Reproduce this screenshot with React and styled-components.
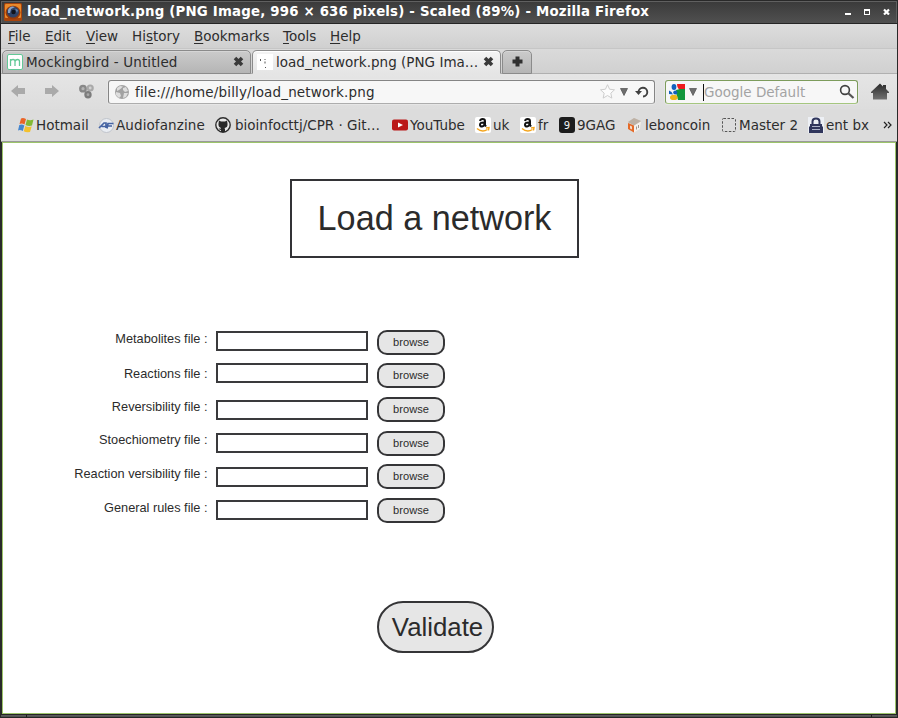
import React from 'react';
import styled, { createGlobalStyle, css } from 'styled-components';

const GlobalStyle = createGlobalStyle`
  html, body, #root { margin: 0; padding: 0; height: 100%; }
  body { overflow: hidden; background: #2b2b2b; }
  * { box-sizing: border-box; }
  svg { display: block; flex: none; }
`;

const Window = styled.div`
  width: 898px;
  height: 718px;
  display: flex;
  flex-direction: column;
  background: #292929;
  font-family: 'DejaVu Sans', sans-serif;
  font-size: 13.5px;
  color: #2d2d2d;
  white-space: nowrap;
`;

const TitleBar = styled.header`
  height: 24px;
  flex: none;
  display: flex;
  align-items: center;
  padding: 0 7px 1px 3px;
  border: 1px solid #292929;
  border-bottom-color: #252525;
  box-shadow: inset 0 1px #606060, inset 1px 0 #606060, inset -1px 0 #606060;
  background: linear-gradient(#3a3a3a, #505050);
  color: #fff;
`;

const Title = styled.h1`
  margin: 0 auto 0 5px;
  font-size: 13.33px;
  font-weight: bold;
  letter-spacing: 0.19px;
`;

const WindowButtons = styled.div`
  display: flex;
  gap: 12px;
`;

const Chrome = styled.div`
  flex: none;
  height: 118px;
  margin: 0 1px;
  display: flex;
  flex-direction: column;
  background: #dcdcdc;
  border-bottom: 1px solid #9a9a9a;
`;

const MenuBar = styled.nav`
  height: 25px;
  flex: none;
  display: flex;
  align-items: center;
  padding: 0 0 1px 7px;
  background: linear-gradient(#dddddd, #d0d0d0);
  border-bottom: 1px solid #c6c6c6;
`;

const MenuItem = styled.div`
  width: ${(p) => p.$width}px;
  u { text-underline-offset: 2px; text-decoration-thickness: 1px; text-decoration-skip-ink: none; }
`;

const TabStrip = styled.div`
  height: 25px;
  flex: none;
  display: flex;
  align-items: flex-end;
  gap: 1px;
  padding-left: 1px;
  background: linear-gradient(#dadada, #d0d0d0);
  box-shadow: inset 0 -1px #b0b0b0;
`;

const Tab = styled.div`
  width: ${(p) => p.$width}px;
  height: 24px;
  display: flex;
  align-items: center;
  padding: 0 6px 1px 4px;
  border: 1px solid #8b8b8b;
  border-radius: 5px 5px 0 0;
  background: linear-gradient(#cbcbcb, #b5b5b5);
  box-shadow: inset 0 1px #d6d6d6;
  ${(p) => p.$active && css`
    background: linear-gradient(#f4f4f4, #e5e5e5);
    border-bottom-color: #e5e5e5;
    box-shadow: inset 0 1px #fff;
  `}
  ${(p) => p.$center && css`justify-content: center; padding: 0 0 1px;`}
`;

const TabLabel = styled.span`
  margin: 0 auto 0 3px;
  letter-spacing: ${(p) => p.$spacing || 0}px;
`;

const NavBar = styled.div`
  height: 35px;
  flex: none;
  display: flex;
  align-items: center;
  padding: 0 8px 0 10px;
  background: linear-gradient(#e5e5e5, #dddddd);
`;

const NavButtons = styled.div`
  width: 97px;
  display: flex;
  gap: 19px;
`;

const Field = styled.div`
  width: ${(p) => p.$width}px;
  height: 24px;
  display: flex;
  align-items: center;
  padding: 0 ${(p) => (p.$search ? 2 : 5)}px 0 ${(p) => (p.$search ? 3 : 5)}px;
  border: 1px solid ${(p) => (p.$search ? '#7d9c5c' : '#858585')};
  border-bottom-color: ${(p) => (p.$search ? '#a5c67f' : '#adadad')};
  border-radius: 3px;
  background: #f7f7f7;
  box-shadow: 0 0 0 1px rgba(235, 235, 235, 0.6);
  margin-right: ${(p) => (p.$search ? 13 : 10)}px;
`;

const Address = styled.span`
  margin: 0 auto 0 5px;
  letter-spacing: 0.15px;
`;

const FieldIcons = styled.div`
  display: flex;
  align-items: center;
  gap: ${(p) => p.$gap}px;
`;

const ReloadButton = styled.div`
  padding-left: 3px;
`;

const Placeholder = styled.span`
  margin: 1px auto 0 6px;
  height: 17px;
  line-height: 17px;
  border-left: 1px solid #111;
  color: #a3a3a3;
`;

const Bookmarks = styled.div`
  flex: 1;
  display: flex;
  align-items: center;
  padding: 0 0 0 17px;
`;

const Bookmark = styled.div`
  width: ${(p) => p.$width}px;
  flex: none;
  display: flex;
  align-items: center;
  gap: 2px;
  letter-spacing: ${(p) => p.$spacing || 0}px;
`;

const BookmarkName = styled.span`
  padding-left: ${(p) => (p.$wide ? 2 : 0)}px;
`;

const Page = styled.main`
  height: 572px;
  flex: none;
  margin: 0 2px;
  border: 1px solid #9cc46a;
  background: #fff;
  display: flex;
  flex-direction: column;
  font-family: 'Liberation Sans', Arial, sans-serif;
  color: #2b2b2b;
`;

const Heading = styled.h2`
  width: 289px;
  height: 79px;
  margin: 36px 0 0 287px;
  border: 2px solid #333336;
  font-size: 34.2px;
  font-weight: normal;
  line-height: 75px;
  text-align: center;
`;

const Form = styled.form`
  margin: 72px 0 0 59px;
  display: flex;
  flex-direction: column;
`;

const Row = styled.div`
  height: ${(p) => p.$height}px;
  display: grid;
  grid-template-columns: 145px 152px 68px;
  column-gap: 9px;
  align-items: start;
`;

const FileLabel = styled.label`
  margin: ${(p) => p.$top}px -0.5px 0 0;
  line-height: 16px;
  font-size: 12.75px;
  text-align: right;
`;

const FileInput = styled.input`
  width: 152px;
  height: 20px;
  margin: ${(p) => p.$top}px 0 0;
  padding: 0 4px;
  border: 2px solid #3a3a3c;
  border-radius: 0;
  background: #fff;
  outline: none;
`;

const Button = styled.button`
  width: ${(p) => (p.$large ? 117 : 68)}px;
  height: ${(p) => (p.$large ? 52 : 25)}px;
  margin: ${(p) => (p.$large ? '78px 0 0 315px' : '0')};
  padding: ${(p) => (p.$large ? '0 0 0 4px' : '0 0 1px')};
  border: 2px solid #353537;
  border-radius: ${(p) => (p.$large ? 26 : 10)}px;
  background: #e6e6e6;
  font: ${(p) => (p.$large ? 25.8 : 11.1)}px 'Liberation Sans', Arial, sans-serif;
  color: #2b2b2b;
`;

const WindowFoot = styled.footer`
  height: 4px;
  flex: none;
  margin: 0 1px;
  display: grid;
  grid-template-columns: 25px 1fr 25px;
  column-gap: 1px;
  border-top: 1px solid #252525;
  border-bottom: 1px solid #252525;
  background: #1c1c1c;
`;

const Grip = styled.div`
  background: linear-gradient(#606060, #4c4c4c);
`;

const FirefoxIcon = () => (
  <svg width="18" height="18" viewBox="0 0 18 18">
    <rect width="18" height="18" rx="1.5" fill="#a8440c" />
    <rect x="1" y="1" width="16" height="14" rx="1" fill="#e98a2c" />
    <ellipse cx="9" cy="9.5" rx="7.5" ry="6.8" fill="#9a3b08" />
    <ellipse cx="9" cy="9" rx="6" ry="5.5" fill="#2f4266" />
    <path d="M4 7Q6 2 11 4L7 6 6 10 4 10Z" fill="#8aa3c4" />
    <circle cx="9.5" cy="9" r="2.2" fill="#11131b" />
    <path d="M11 5.500l3 1.500-1 3z" fill="#6683ac" />
  </svg>
);
const MinimizeIcon = () => (
  <svg width="7" height="7"><path d="M0 5h6v2H0z" fill="#fff" /></svg>
);
const MaximizeIcon = () => (
  <svg width="7" height="7"><path d="M0 1h6v6H0zM1 3v3h4V3z" fill="#fff" fillRule="evenodd" /></svg>
);
const CloseIcon = () => (
  <svg width="7" height="7"><path d="M1 1.500l5 5M6 1.500l-5 5" stroke="#fff" strokeWidth="2.200" /></svg>
);
const MockingbirdIcon = () => (
  <svg width="16" height="16" fill="none" stroke="#63c997">
    <rect x=".5" y=".5" width="15" height="15" rx="1.500" fill="#fff" />
    <path d="M3.500 12V5M3.500 7Q4 5.500 6 5.500 8 5.500 8 7.500V12M8 7.500Q8.500 5.500 10.500 5.500 12.500 5.500 12.500 7.500V12" strokeWidth="1.300" />
  </svg>
);
const PageIcon = () => (
  <svg width="16" height="16">
    <rect width="16" height="16" fill="#fff" />
    <path d="M3 5h1v2H3zM7.500 5h1v1h-1zM7.500 7.500h1v2h-1zM8 13h1v1H8z" fill="#555" />
  </svg>
);
const TabCloseIcon = () => (
  <svg width="11" height="11">
    <path d="M2 2l7 7M9 2l-7 7" stroke="#3a3a3a" strokeWidth="3.600" />
  </svg>
);
const PlusIcon = () => (
  <svg width="11" height="11"><path d="M3.500.5h4v3h3v4h-3v3h-4v-3h-3v-4h3z" fill="#303030" /></svg>
);
const ArrowIcon = ({ d }) => (
  <svg width="15" height="15"><path transform="translate(0 1)" d={d} fill="#aaaaaa" /></svg>
);
const CirclesIcon = () => (
  <svg width="15" height="15">
    <circle cx="4" cy="4.700" r="3.900" fill="#888" />
    <circle cx="11.200" cy="4" r="3.600" fill="#a9a9a9" />
    <circle cx="9" cy="10.700" r="3.700" fill="#7c7c7c" />
    <circle cx="4" cy="4.700" r="1.600" fill="#b4b4b4" />
    <circle cx="11.200" cy="4" r="1.400" fill="#d2d2d2" />
    <circle cx="9" cy="10.700" r="1.400" fill="#a8a8a8" />
  </svg>
);
const GlobeIcon = () => (
  <svg width="16" height="16">
    <circle cx="8" cy="8" r="7" fill="#a2a2a2" />
    <path d="M3 4l3-2 3 .5-2 2L5 6 3 7zM9 4l3-1 2 4-3 1-2-2zM2 8l4 1 1 3-2 2-3-3zM10 9l4 0-2 4-3 1z" fill="#dedede" />
  </svg>
);
const StarIcon = () => (
  <svg width="17" height="17" viewBox="0 0 18 17">
    <path d="M9 1.300l2.200 4.800 5.200.6-3.900 3.600 1.100 5.200L9 12.800l-4.600 2.700 1.100-5.200L1.600 6.700l5.200-.6z" fill="#fcfcfc" stroke="#cacaca" />
  </svg>
);
const DropIcon = () => (
  <svg width="8" height="8"><path d="M.5.5h7L4 7.500z" fill="#6d6d6d" stroke="#505050" strokeWidth=".7" /></svg>
);
const ReloadIcon = () => (
  <svg width="14" height="13" fill="none">
    <path d="M3.500 7.200A4.400 4.400 0 1 1 8 11.500" stroke="#404040" strokeWidth="1.900" />
    <path d="M0 6h7L3.500 10z" fill="#404040" />
  </svg>
);
const GoogleIcon = () => (
  <svg width="16" height="16">
    <rect width="16" height="16" fill="#f4f6fa" />
    <path d="M8 0h8v6H11Q8 4 8 0z" fill="#ee1c1c" />
    <path d="M11 5h5v11H9Q7 10 7 6z" fill="#12963c" />
    <path d="M0 6.500q3 1 4 4L0 10z" fill="#1261bd" />
    <ellipse cx="5" cy="3" rx="2.400" ry="3" fill="#1261bd" />
    <circle cx="6.300" cy="8.500" r="2.100" fill="#1261bd" />
    <ellipse cx="4.800" cy="13.400" rx="3.800" ry="2.600" fill="#efb51a" />
  </svg>
);
const SearchIcon = () => (
  <svg width="16" height="16" fill="none">
    <circle cx="6" cy="6" r="4.400" stroke="#404040" strokeWidth="1.600" />
    <path d="M9 9l5.500 5" stroke="#555" strokeWidth="2.300" />
  </svg>
);
const HomeIcon = () => (
  <svg width="18" height="17">
    <defs><linearGradient id="roof" x2="0" y2="1"><stop stopColor="#292929" /><stop offset="1" stopColor="#727272" /></linearGradient></defs>
    <path d="M9 .5l3 3V2h3v4l3 3v1h-2v6.500H2V10H0V9z" fill="url(#roof)" />
  </svg>
);
const WindowsIcon = () => (
  <svg width="16" height="16">
    <path d="M3 1.500Q5 .5 8 2L6.500 7.500Q4 6 1.500 7z" fill="#ea6427" />
    <path d="M9 2.500Q12 4 15.500 2.500L14 8.500Q11 9.500 7.500 8z" fill="#83b935" />
    <path d="M1.300 8Q4 7 6.300 8.500L4.800 14Q2 12.500 0 13.500z" fill="#4586cf" />
    <path d="M7.300 9Q10 10.500 13.700 9.500L12 15Q8 15.500 5.800 14.300z" fill="#f3c12e" />
  </svg>
);
const AudiofanzineIcon = () => (
  <svg width="16" height="16">
    <circle cx="8.500" cy="8.500" r="7" fill="#e9edf3" stroke="#c0c4cb" />
    <path d="M1 11L6 6H8V11M3.500 9.500H8M9 11.500L10 6.500H15.500M9.500 9H14" fill="none" stroke="#4463a3" strokeWidth="1.700" />
  </svg>
);
const GithubIcon = () => (
  <svg width="16" height="16">
    <circle cx="8" cy="8" r="7.200" fill="#e8e8e8" stroke="#2d2d2d" strokeWidth="1.400" />
    <path d="M4 3.500l2 1h4l2-1 .5 3Q13 10.500 9.500 11l.5 1v3H6v-2Q4 13 3.500 11q1 1 2.500.5V11Q3 10 3.500 6.500z" fill="#292929" />
  </svg>
);
const YoutubeIcon = () => (
  <svg width="16" height="16"><rect y="2.500" width="16" height="11" rx="2" fill="#ba1818" /><path d="M6 5.500l5 2.500-5 2.500z" fill="#fff" /></svg>
);
const AmazonIcon = () => (
  <svg width="16" height="16" fill="none">
    <rect width="16" height="16" rx="2" fill="#fff" />
    <path d="M5 4Q5.500 2 7.500 2 10 2 10 4.200V8L11 9.500M9.500 5.500Q5 5.200 5 7.700 5 9.500 7 9.500 9.500 9.200 9.500 6.500" stroke="#111" strokeWidth="2" />
    <path d="M2 11.500Q7 15.800 12.500 12.500M11 11l3-.5-.5 3" stroke="#f4a51c" strokeWidth="1.400" />
  </svg>
);
const NineGagBadge = styled.span`
  width: 16px;
  height: 16px;
  flex: none;
  border-radius: 3px;
  background: #1d1d1d;
  color: #f4f4f4;
  font-size: 10px;
  line-height: 17px;
  text-align: center;
`;
const BoxIcon = () => (
  <svg width="16" height="16">
    <path d="M1 5l6-4 7 3-1 8-6 3.500-6-4z" fill="#d9d1c8" />
    <path d="M1 6l6 2.500v7L1 12z" fill="#e56a28" />
    <path d="M3 8.500l2 1v3l-2-1z" fill="#f2dbc9" />
    <path d="M7 8.500l7-4-1 7.500-6 3.500z" fill="#f3f0ec" />
    <path d="M1 5l6-4 7 3-7 4.500z" fill="#bdb1a5" />
    <path d="M9.500 9.500v3M11.500 8v3" stroke="#a0968e" />
  </svg>
);
const DashedIcon = () => (
  <svg width="16" height="16"><rect x="1.500" y="1.500" width="13" height="13" rx="1" fill="none" stroke="#555" strokeDasharray="2.500 1.500" /></svg>
);
const LockIcon = () => (
  <svg width="16" height="16" fill="none">
    <rect width="16" height="16" fill="#edf0f5" />
    <path d="M4.500 8V4.500Q4.500 1.500 8 1.500T11.500 4.500V8" stroke="#30365c" strokeWidth="2" />
    <path d="M2 7h12v2l1 1v6H1v-6l1-1z" fill="#30365c" />
    <path d="M4 9.500h8M4 12.500h8" stroke="#aeb4ca" />
  </svg>
);
const ChevronsIcon = () => (
  <svg width="9" height="8" fill="none"><path d="M1 1l3 3-3 3M5 1l3 3-3 3" stroke="#222" strokeWidth="1.200" /></svg>
);

const menus = [
  { before: '', key: 'F', after: 'ile', width: 37 },
  { before: '', key: 'E', after: 'dit', width: 41 },
  { before: '', key: 'V', after: 'iew', width: 46 },
  { before: 'Hi', key: 's', after: 'tory', width: 62 },
  { before: '', key: 'B', after: 'ookmarks', width: 89 },
  { before: '', key: 'T', after: 'ools', width: 47 },
  { before: '', key: 'H', after: 'elp', width: 40 },
];

const bookmarks = [
  { name: 'Hotmail', icon: <WindowsIcon />, width: 80 },
  { name: 'Audiofanzine', icon: <AudiofanzineIcon />, width: 117, spacing: 0.1 },
  { name: 'bioinfocttj/CPR · Git…', icon: <GithubIcon />, width: 177, wide: true },
  { name: 'YouTube', icon: <YoutubeIcon />, width: 83 },
  { name: 'uk', icon: <AmazonIcon />, width: 45 },
  { name: 'fr', icon: <AmazonIcon />, width: 39 },
  { name: '9GAG', icon: <NineGagBadge>9</NineGagBadge>, width: 68 },
  { name: 'leboncoin', icon: <BoxIcon />, width: 94 },
  { name: 'Master 2', icon: <DashedIcon />, width: 87 },
  { name: 'ent bx', icon: <LockIcon />, width: 75 },
];

const files = [
  { label: 'Metabolites file :', height: 33, labelTop: 1, inputTop: 1 },
  { label: 'Reactions file :', height: 34, labelTop: 3, inputTop: 0 },
  { label: 'Reversibility file :', height: 34, labelTop: 2, inputTop: 3 },
  { label: 'Stoechiometry file :', height: 33, labelTop: 1, inputTop: 2 },
  { label: 'Reaction versibility file :', height: 34, labelTop: 2, inputTop: 3 },
  { label: 'General rules file :', height: 25, labelTop: 2, inputTop: 2 },
];

export default function App() {
  return (
    <>
      <GlobalStyle />
      <Window>
        <TitleBar>
          <FirefoxIcon />
          <Title>load_network.png (PNG Image, 996 × 636 pixels) - Scaled (89%) - Mozilla Firefox</Title>
          <WindowButtons><MinimizeIcon /><MaximizeIcon /><CloseIcon /></WindowButtons>
        </TitleBar>
        <Chrome>
          <MenuBar>
            {menus.map((m) => (
              <MenuItem key={m.after} $width={m.width}>{m.before}<u>{m.key}</u>{m.after}</MenuItem>
            ))}
          </MenuBar>
          <TabStrip>
            <Tab $width={249}>
              <MockingbirdIcon /><TabLabel $spacing={0.11}>Mockingbird - Untitled</TabLabel><TabCloseIcon />
            </Tab>
            <Tab $width={249} $active>
              <PageIcon /><TabLabel $spacing={0.02}>load_network.png (PNG Ima…</TabLabel><TabCloseIcon />
            </Tab>
            <Tab $width={30} $center><PlusIcon /></Tab>
          </TabStrip>
          <NavBar>
            <NavButtons>
              <ArrowIcon d="M0 6L7 0v3h7v6H7v3z" />
              <ArrowIcon d="M14 6L7 0v3H0v6h7v3z" />
              <CirclesIcon />
            </NavButtons>
            <Field $width={547}>
              <GlobeIcon />
              <Address>file:///home/billy/load_network.png</Address>
              <FieldIcons $gap={4}><StarIcon /><DropIcon /><ReloadButton><ReloadIcon /></ReloadButton></FieldIcons>
            </Field>
            <Field $width={193} $search>
              <FieldIcons $gap={4}><GoogleIcon /><DropIcon /></FieldIcons>
              <Placeholder>Google Default</Placeholder>
              <SearchIcon />
            </Field>
            <HomeIcon />
          </NavBar>
          <Bookmarks>
            {bookmarks.map((b) => (
              <Bookmark key={b.name} $width={b.width} $spacing={b.spacing}>
                {b.icon}<BookmarkName $wide={b.wide}>{b.name}</BookmarkName>
              </Bookmark>
            ))}
            <ChevronsIcon />
          </Bookmarks>
        </Chrome>
        <Page>
          <Heading>Load a network</Heading>
          <Form onSubmit={(e) => e.preventDefault()}>
            {files.map((f) => (
              <Row key={f.label} $height={f.height}>
                <FileLabel $top={f.labelTop}>{f.label}</FileLabel>
                <FileInput $top={f.inputTop} aria-label={f.label} />
                <Button type="button">browse</Button>
              </Row>
            ))}
            <Button type="submit" $large>Validate</Button>
          </Form>
        </Page>
        <WindowFoot><Grip /><Grip /><Grip /></WindowFoot>
      </Window>
    </>
  );
}
